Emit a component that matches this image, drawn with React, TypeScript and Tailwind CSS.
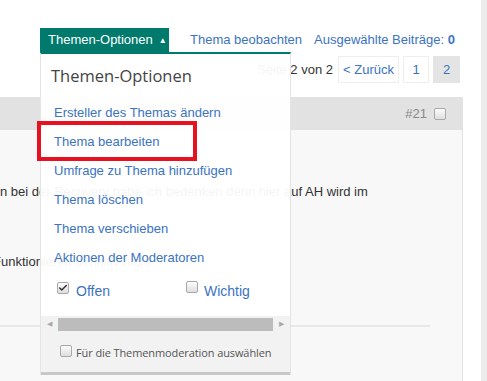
import { Check } from 'lucide-react'

const menuItems = [
  "Ersteller des Themas ändern",
  "Thema bearbeiten",
  "Umfrage zu Thema hinzufügen",
  "Thema löschen",
  "Thema verschieben",
  "Aktionen der Moderatoren"
]

function Box({ checked = false }: { checked?: boolean }) {
  return (
    <span className="relative inline-flex w-[12px] h-[12px] shrink-0 rounded-[2px] border border-[#a9a9a9] bg-gradient-to-b from-[#fdfdfd] to-[#dedede]">
      {checked && (
        <Check size={10} strokeWidth={3.5} className="absolute left-[0px] top-[0px] text-[#333]" />
      )}
    </span>
  )
}

export default function App() {
  return (
    <div className="relative w-[487px] h-[381px] overflow-hidden flex bg-white font-['Liberation_Sans',Arial,sans-serif] text-[13px] text-[#333]">
      <div className="w-[481px] flex flex-col">
        {/* toolbar */}
        <div className="h-[52px] pt-[28px] pl-[40px] flex items-start">
          <div className="h-[24px] w-[129px] bg-[#007a6c] text-white flex items-center pl-[8px] gap-[6px]">
            <span>Themen-Optionen</span>
            <span className="text-[8px] leading-none mt-[2px]">▲</span>
          </div>
          <div className="h-[24px] flex items-center ml-[21px] text-[#3b73c2]">
            <span>Thema beobachten</span>
            <span className="ml-[12px]">Ausgewählte Beiträge: <b>0</b></span>
          </div>
        </div>

        {/* pagination */}
        <div className="h-[45px] pt-[4px] pr-[21px] flex justify-end items-start gap-[4px]">
          <span className="h-[27px] flex items-center mr-[1px]">Seite 2 von 2</span>
          <span className="h-[27px] w-[61px] flex items-center justify-center border border-[#eeeeee] text-[#3b73c2]">&lt; Zurück</span>
          <span className="h-[27px] w-[26px] flex items-center justify-center border border-[#eeeeee] text-[#3b73c2]">1</span>
          <span className="h-[27px] w-[27px] flex items-center justify-center bg-[#e4e4e4] text-[#3b73c2]">2</span>
        </div>

        {/* post */}
        <div className="w-[463px] flex-1 flex flex-col border-r border-[#e2e2e2]">
          <div className="h-[33px] bg-[#e2e2e2] flex items-center justify-end pr-[16px] gap-[7px] text-[#888]">
            <span className="mt-[1px]">#21</span>
            <Box />
          </div>
          <div className="flex-1 bg-[#f8f8f8] flex flex-col">
            <p className="mt-[52px] whitespace-nowrap">n bei der Recovery habe ich bedenken denn hier auf AH wird im</p>
            <p className="mt-[50px] -ml-[7px] whitespace-nowrap">Funktionieren definitiv nicht</p>
            <div className="mt-[54px] w-[430px] h-[2px] bg-[#e8e8e8]" />
          </div>
        </div>
      </div>
      <div className="w-[6px] bg-[#ececec]" />

      {/* dropdown */}
      <div className="absolute left-[40px] top-[52px] w-[251px] h-[323px] flex flex-col border-t-2 border-[#007a6c] border-l border-r border-l-[#e4e4e4] border-r-[#e4e4e4] bg-white/95">
        <div className="h-[44px] flex items-center pl-[10px] pt-[1px] font-['Open_Sans',sans-serif] text-[16.5px] text-[#444]">
          Themen-Optionen
        </div>
        {menuItems.map((item, i) => (
          <div key={i} className="h-[29px] flex items-center pl-[13px] text-[#3b73c2]">
            {item}
          </div>
        ))}
        <div className="h-[44px] flex items-center pb-[12px] pl-[16px] text-[14px] text-[#3b73c2]">
          <Box checked />
          <span className="ml-[7px] mt-[7px]">Offen</span>
          <span className="ml-[76px]"><Box /></span>
          <span className="ml-[6px] mt-[7px]">Wichtig</span>
        </div>
        <div className="flex-1 flex flex-col bg-[#f2f2f2]">
          <div className="h-[17px] flex items-center pl-[6px] pr-[6px] gap-[6px] text-[7px] text-[#aaa]">
            <span>◀</span>
            <div className="w-[215px] h-[13px] bg-[#bcbcbc]" />
            <span>▶</span>
          </div>
          <div className="flex-1 flex items-center pl-[19px] gap-[4px] pb-[4px] font-['Open_Sans',sans-serif] text-[11px] tracking-[-0.1px] text-[#555]">
            <Box />
            <span className="mt-[6px]">Für die Themenmoderation auswählen</span>
          </div>
        </div>
        <div className="h-[3px] bg-[#c8c8c8]" />
      </div>

      {/* highlight */}
      <div className="absolute left-[37px] top-[121px] w-[160px] h-[40px] border-[4px] border-[#e8111f]" />
    </div>
  )
}
